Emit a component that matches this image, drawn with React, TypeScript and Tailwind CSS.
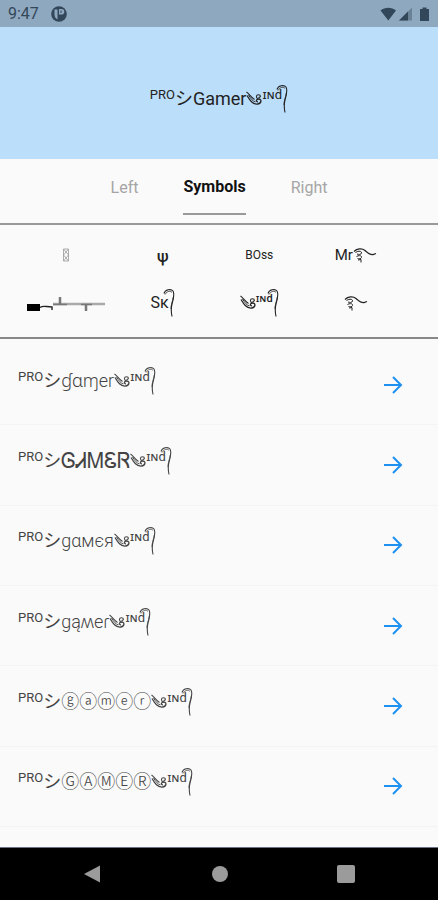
import React, { JSX, ReactNode, useState } from 'react';

type Side = 'Left' | 'Symbols' | 'Right';

const TABS: Side[] = ['Left', 'Symbols', 'Right'];

function Swirl(): JSX.Element {
    return (
        <svg className="h-4 w-4 shrink-0" viewBox="0 0 16 16" fill="none" stroke="currentColor" aria-hidden="true">
            <path d="M0.5 1 C3 2.5 5 6.5 8.5 8.5" strokeWidth="1.1" />
            <path d="M1 4.5 C4 9.500 6.500 13.500 11.500 13 C15.500 12.500 16 8.500 13 8 C10 7.800 9.500 10.800 12 10.800" strokeWidth="1.3" />
            <path d="M2.500 4 C5 8 7 10.500 9.500 10.800" strokeWidth="0.9" />
            <path d="M12.500 8 C9.500 7 10 3.800 12.500 3.800 C15 3.800 15 6.500 12.500 6.500" strokeWidth="1.1" />
        </svg>
    );
}

function Tail(): JSX.Element {
    return (
        <svg className="-ml-1.5 h-[30px] w-3 shrink-0" viewBox="0 0 12 30" fill="none" stroke="currentColor" aria-hidden="true">
            <path d="M1 5.500 C2 1.500 8 0.500 10 3 C11.500 5.500 10.500 11 9 16 C8 20 8 24 9 28.500" strokeWidth="1.1" />
            <path d="M2 6.500 C4 3 7.500 2.500 9 4.500 M10.300 9 C9.500 14 7.800 17 8 21" strokeWidth="0.8" />
        </svg>
    );
}

function Wave(): JSX.Element {
    return (
        <svg className="h-4 w-6 shrink-0" viewBox="0 0 24 16" fill="none" stroke="currentColor" aria-hidden="true">
            <path d="M1 4.500 C4 1.500 9 1 12 3.500 C15 6 17 8 20 7.500 L23 6.500" strokeWidth="1.3" />
            <path d="M2.500 5.500 C5 3.500 9 4 8.500 6 C8 8 5.500 7.500 4 7 M3.500 9.500 C6 8 9 8.500 8.500 10.500 C8 12 6 12 4.500 11.500 M5 13 L8 12.500 V15.500" strokeWidth="1" />
        </svg>
    );
}

function Rifle(): JSX.Element {
    return (
        <svg className="h-4 w-20" viewBox="0 0 80 16" aria-hidden="true">
            <path d="M1 9h13v7H1z" fill="#000" />
            <path d="M14 12.500 C17 10 20 12 26 12 V15" fill="none" stroke="#222" strokeWidth="1.400" />
            <path d="M27 9h52" stroke="#aaa" strokeWidth="2.500" />
            <path d="M27 9.500h14M55 9.500h11" stroke="#777" strokeWidth="1.400" />
            <path d="M34 2v7M60 9v7" stroke="#777" strokeWidth="2.500" />
        </svg>
    );
}

function MissingGlyph(): JSX.Element {
    return (
        <svg className="h-3.5 w-2" viewBox="0 0 8 14" fill="none" stroke="#999" strokeWidth="0.8" aria-hidden="true">
            <path d="M1.500 1h5v12h-5z M1.500 1l5 6-5 6 M6.500 1l-5 6 5 6" />
        </svg>
    );
}

function Wind({ className }: { className: string }): JSX.Element {
    return (
        <span className="flex items-center">
            <Swirl />
            <span className={`pb-2 leading-4 ${className}`}>ɪɴd</span>
            <Tail />
        </span>
    );
}

function Nickname({ children }: { children: ReactNode }): JSX.Element {
    return (
        <span className="flex h-8 items-center text-lg whitespace-nowrap">
            <span className="pb-2 text-[13px] leading-4">PRO</span>
            <span>シ</span>
            <span>{children}</span>
            <Wind className="text-[13px]" />
        </span>
    );
}

const SYMBOLS: { name: string; content: ReactNode }[] = [
    { name: 'Box', content: <MissingGlyph /> },
    { name: 'Psi', content: <span className="pt-1 text-base font-medium">ψ</span> },
    { name: 'Boss', content: <span className="text-xs">BOss</span> },
    { name: 'Mr', content: <><span>Mr</span><Wave /></> },
    { name: 'Rifle', content: <Rifle /> },
    { name: 'Sk', content: <><span className="text-base">Sĸ</span><Tail /></> },
    { name: 'Wind', content: <Wind className="text-[11px] font-medium" /> },
    { name: 'Wave', content: <Wave /> },
];

const STYLES = [
    { text: 'ɠɑɱer', className: 'font-light' },
    { text: 'ᎶᏗᎷᏋᏒ', className: 'text-[21px]' },
    { text: 'gαмєя', className: 'font-light' },
    { text: 'gąʍeɾ', className: 'font-light' },
    { text: 'ⓖⓐⓜⓔⓡ', className: 'font-light' },
    { text: 'ⒼⒶⓂⒺⓇ', className: 'font-light' },
];

function StatusBar(): JSX.Element {
    return (
        <div className="flex h-[27px] shrink-0 items-center bg-[#8ea8bf] px-2 text-[#33475a]">
            <span className="text-base leading-5">9:47</span>
            <svg className="ml-3 h-4 w-4" viewBox="0 0 16 16" aria-hidden="true">
                <circle cx="8" cy="8" r="7.800" fill="currentColor" />
                <path d="M3.500 3.500h3v10c-2-1-3-3-3-5z M8 3h2.500a2.800 2.800 0 0 1 0 5.600H8z" fill="#8ea8bf" />
                <path d="M9.500 4.500h1v2.500h-1z" fill="currentColor" />
            </svg>
            <svg className="ml-auto h-4 w-[50px]" viewBox="0 0 50 16" aria-hidden="true">
                <path d="M0.500 4.500 C5 0.800 11.500 0.800 16 4.500 L8.300 14.500z" fill="currentColor" />
                <path d="M19 14.500 L32 1.500 V14.500z" fill="#6b8296" />
                <path d="M19 14.500 L28 5.500 V14.500z" fill="currentColor" />
                <path d="M40 3h2.500V1.500h4V3H49v12h-9z" fill="currentColor" />
            </svg>
        </div>
    );
}

function NavigationBar(): JSX.Element {
    return (
        <nav className="flex h-[53px] shrink-0 items-center justify-between border-t border-gray-500 bg-black px-[83px] text-[#9b9b9b]">
            <button type="button" aria-label="Back">
                <svg className="h-5 w-5" viewBox="0 0 20 20" aria-hidden="true">
                    <path d="M1 10 L17 1.500 V18.500z" fill="currentColor" />
                </svg>
            </button>
            <button type="button" aria-label="Home" className="h-4 w-4 rounded-full bg-current" />
            <button type="button" aria-label="Recent apps" className="h-[18px] w-[18px] rounded-xs bg-current" />
        </nav>
    );
}

export default function App(): JSX.Element {
    const [active, setActive] = useState<Side>('Symbols');

    return (
        <div className="flex min-h-screen flex-col bg-[#fafafa] font-[Roboto,'Noto_Sans','DejaVu_Sans','Noto_Sans_CJK_JP',sans-serif] text-[#222]">
            <StatusBar />

            {/* Preview */}
            <header className="flex h-[132px] shrink-0 items-center justify-center bg-[#bbdefb] pt-3">
                <h1>
                    <Nickname>Gamer</Nickname>
                </h1>
            </header>

            <div role="tablist" className="flex h-[66px] shrink-0 justify-center gap-[45px] border-b-2 border-[#999] pt-[18px]">
                {TABS.map((tab) => (
                    <button
                        key={tab}
                        type="button"
                        role="tab"
                        aria-selected={active === tab}
                        onClick={() => setActive(tab)}
                        className={
                            active === tab
                                ? 'h-[38px] border-b-2 border-[#999] pb-4 text-base leading-5 font-bold text-[#111]'
                                : 'h-[38px] pb-4 text-base leading-5 text-[#a5a5a5]'
                        }
                    >
                        {tab}
                    </button>
                ))}
            </div>

            {/* Symbols */}
            <div className="grid shrink-0 grid-cols-4 border-b-2 border-[#888] pt-1.5 pr-[34px] pb-2.5 pl-[18px]">
                {SYMBOLS.map((symbol) => (
                    <button
                        key={symbol.name}
                        type="button"
                        aria-label={symbol.name}
                        className="flex h-12 items-center justify-center text-[15px]"
                    >
                        {symbol.content}
                    </button>
                ))}
            </div>

            {/* Generated names */}
            <ul className="flex flex-1 flex-col pt-1.5 pb-5">
                {STYLES.map((style) => (
                    <li key={style.text} className="flex min-h-20 flex-1 items-center justify-between border-b border-gray-100 pr-[35px] pl-[18px]">
                        <div className="pb-2 text-[#444]">
                            <Nickname>
                                <span className={style.className}>{style.text}</span>
                            </Nickname>
                        </div>
                        <button type="button" aria-label="Open" className="text-[#1e90f0]">
                            <svg className="h-5 w-5" viewBox="0 0 20 20" fill="none" stroke="currentColor" strokeWidth="2" aria-hidden="true">
                                <path d="M1 10h17 M10 2l8 8-8 8" />
                            </svg>
                        </button>
                    </li>
                ))}
            </ul>

            <NavigationBar />
        </div>
    );
}
